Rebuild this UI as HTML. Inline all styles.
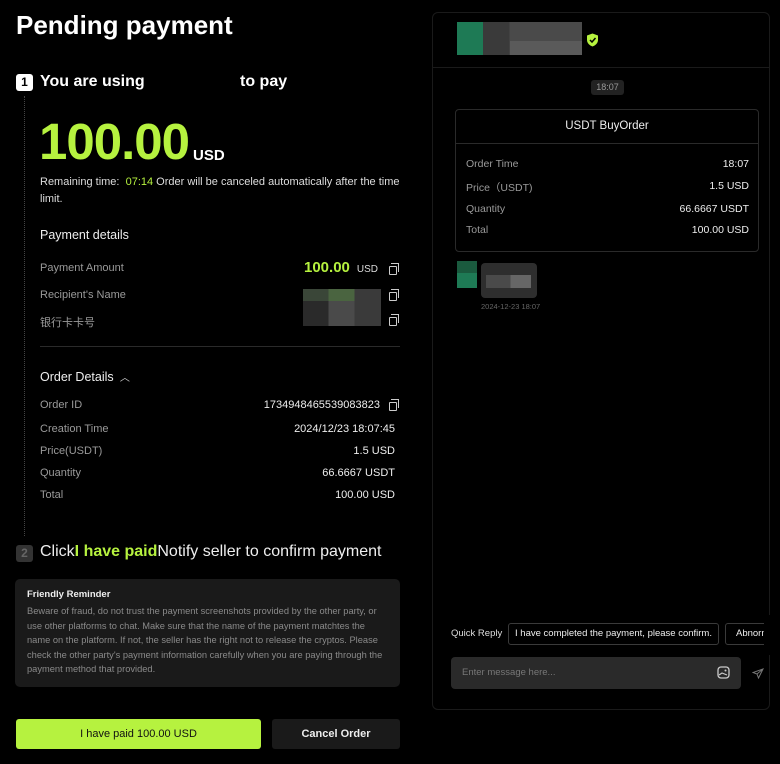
<!DOCTYPE html>
<html><head><meta charset="utf-8"><style>
*{margin:0;padding:0;box-sizing:border-box}
body{width:780px;height:764px;background:#000;color:#fff;font-family:"Liberation Sans","Noto Sans CJK SC",sans-serif;position:relative;overflow:hidden}
.a{position:absolute;white-space:nowrap}
.lbl{color:#9a9a9a;font-size:11px}
.val{color:#eee;font-size:11px;text-align:right}
.g{color:#b6f23f}
.cp{position:absolute;width:8px;height:9px;border:1.2px solid #ccc;border-radius:1px}
.cp:after{content:"";position:absolute;left:1px;top:-4px;width:7px;height:8px;border-top:1.2px solid #ccc;border-right:1.2px solid #ccc}
</style></head><body>
<div class="a" style="left:16px;top:10px;font-size:26px;font-weight:bold">Pending payment</div>

<div class="a" style="left:16px;top:74px;width:17px;height:17px;background:#fff;border-radius:3px;color:#000;font-size:12px;font-weight:bold;text-align:center;line-height:17px">1</div>
<div class="a" style="left:40px;top:73px;font-size:16px;font-weight:bold">You are using</div>
<div class="a" style="left:240px;top:73px;font-size:16px;font-weight:bold">to pay</div>
<div class="a" style="left:24px;top:96px;height:440px;border-left:1px dotted #444"></div>

<div class="a g" style="left:39px;top:112px;font-size:51px;font-weight:bold;letter-spacing:-1px">100.00</div>
<div class="a" style="left:193px;top:147px;font-size:15px;font-weight:bold">USD</div>
<div class="a" style="left:40px;top:174px;font-size:11px;line-height:17px;width:360px;white-space:normal;color:#ddd">Remaining time: &nbsp;<span class="g">07:14</span> Order will be canceled automatically after the time limit.</div>

<div class="a" style="left:40px;top:228px;font-size:12.5px;color:#eee">Payment details</div>
<div class="a lbl" style="left:40px;top:262px">Payment Amount</div>
<div class="a" style="left:304px;top:259px;font-size:15px;font-weight:bold" ><span class="g">100.00</span> <span style="font-size:10px;font-weight:normal;color:#ddd">&nbsp;USD</span></div>
<div class="cp" style="left:389px;top:266px"></div>
<div class="a lbl" style="left:40px;top:289px">Recipient's Name</div>
<div class="cp" style="left:389px;top:292px"></div>
<div class="a lbl" style="left:40px;top:314px">银行卡卡号</div>
<div class="cp" style="left:389px;top:317px"></div>
<div class="a" style="left:303px;top:289px;width:78px;height:37px;background:linear-gradient(90deg,#2a2a2a 33%,#4a4a4a 33%,#4a4a4a 66%,#3a3a3a 66%)"></div>
<div class="a" style="left:303px;top:289px;width:78px;height:12px;background:linear-gradient(90deg,#3a4638 33%,#4a6440 33%,#4a6440 66%,#3a3a3a 66%)"></div>
<div class="a" style="left:40px;top:346px;width:360px;border-top:1px solid #2a2a2a"></div>

<div class="a" style="left:40px;top:369px;font-size:12.5px;color:#eee">Order Details <span style="color:#ccc;font-size:10px">&nbsp;︿</span></div>
<div class="a lbl" style="left:40px;top:399px">Order ID</div>
<div class="a val" style="left:240px;width:140px;top:399px">1734948465539083823</div>
<div class="cp" style="left:389px;top:402px"></div>
<div class="a lbl" style="left:40px;top:423px">Creation Time</div>
<div class="a val" style="left:240px;width:155px;top:423px">2024/12/23 18:07:45</div>
<div class="a lbl" style="left:40px;top:445px">Price(USDT)</div>
<div class="a val" style="left:240px;width:155px;top:445px">1.5 USD</div>
<div class="a lbl" style="left:40px;top:467px">Quantity</div>
<div class="a val" style="left:240px;width:155px;top:467px">66.6667 USDT</div>
<div class="a lbl" style="left:40px;top:489px">Total</div>
<div class="a val" style="left:240px;width:155px;top:489px">100.00 USD</div>

<div class="a" style="left:16px;top:545px;width:17px;height:17px;background:#333;border-radius:3px;color:#666;font-size:12px;font-weight:bold;text-align:center;line-height:17px">2</div>
<div class="a" style="left:40px;top:543px;font-size:16px;color:#eee">Click<b class="g">I have paid</b>Notify seller to confirm payment</div>

<div class="a" style="left:15px;top:579px;width:385px;height:108px;background:#1a1a1a;border-radius:5px"></div>
<div class="a" style="left:27px;top:589px;font-size:9.5px;font-weight:bold;color:#eee">Friendly Reminder</div>
<div class="a" style="left:27px;top:604px;width:360px;white-space:normal;font-size:9.3px;line-height:14.5px;color:#8a8a8a">Beware of fraud, do not trust the payment screenshots provided by the other party, or use other platforms to chat. Make sure that the name of the payment matchtes the name on the platform. If not, the seller has the right not to release the cryptos. Please check the other party's payment information carefully when you are paying through the payment method that provided.</div>

<div class="a" style="left:16px;top:719px;width:245px;height:30px;background:#b6f23f;border-radius:3px;color:#111;font-size:11px;text-align:center;line-height:30px">I have paid 100.00 USD</div>
<div class="a" style="left:272px;top:719px;width:128px;height:30px;background:#1a1a1a;border-radius:3px;color:#eee;font-size:11px;font-weight:bold;text-align:center;line-height:30px">Cancel Order</div>

<!-- right panel -->
<div class="a" style="left:432px;top:12px;width:338px;height:698px;border:1px solid #1a1a1a;border-radius:6px"></div>
<div class="a" style="left:432px;top:67px;width:338px;border-top:1px solid #1a1a1a"></div>
<div class="a" style="left:457px;top:22px;width:125px;height:33px;background:linear-gradient(90deg,#1e7a55 21%,#3a3a3a 21%,#3a3a3a 42%,#4a4a4a 42%)"></div>
<div class="a" style="left:510px;top:41px;width:72px;height:14px;background:#5a5a5a"></div>
<svg class="a" style="left:586px;top:33px" width="13" height="14" viewBox="0 0 13 14"><path d="M6.5 0.5L12 2.5V7C12 10 9.5 12.5 6.5 13.5C3.5 12.5 1 10 1 7V2.5Z" fill="#b6f23f"/><path d="M4 7L6 9L9.5 5" stroke="#000" stroke-width="1.5" fill="none"/></svg>

<div class="a" style="left:591px;top:80px;width:33px;height:15px;background:#222;border-radius:3px;color:#999;font-size:9px;text-align:center;line-height:15px">18:07</div>

<div class="a" style="left:455px;top:109px;width:304px;height:143px;border:1px solid #2a2a2a;border-radius:4px"></div>
<div class="a" style="left:455px;top:143px;width:304px;border-top:1px solid #2a2a2a"></div>
<div class="a" style="left:455px;top:120px;width:304px;text-align:center;font-size:11.5px;color:#eee">USDT BuyOrder</div>
<div class="a lbl" style="left:466px;top:158px;font-size:10.5px">Order Time</div>
<div class="a val" style="left:600px;width:149px;top:158px;font-size:10.5px">18:07</div>
<div class="a lbl" style="left:466px;top:180px;font-size:10.5px">Price（USDT)</div>
<div class="a val" style="left:600px;width:149px;top:180px;font-size:10.5px">1.5 USD</div>
<div class="a lbl" style="left:466px;top:203px;font-size:10.5px">Quantity</div>
<div class="a val" style="left:600px;width:149px;top:203px;font-size:10.5px">66.6667 USDT</div>
<div class="a lbl" style="left:466px;top:224px;font-size:10.5px">Total</div>
<div class="a val" style="left:600px;width:149px;top:224px;font-size:10.5px">100.00 USD</div>

<div class="a" style="left:457px;top:261px;width:20px;height:27px;background:linear-gradient(#1a5a3e 45%,#1e7a55 45%)"></div>
<div class="a" style="left:481px;top:263px;width:56px;height:35px;background:#2e2e2e;border-radius:4px"></div>
<div class="a" style="left:486px;top:275px;width:45px;height:13px;background:linear-gradient(90deg,#4a4a4a 55%,#666 55%)"></div>
<div class="a" style="left:481px;top:302px;font-size:7.5px;color:#666">2024-12-23 18:07</div>

<div class="a" style="left:451px;top:628px;font-size:9.5px;color:#ddd">Quick Reply</div>
<div class="a" style="left:508px;top:623px;width:211px;height:22px;border:1px solid #3a3a3a;border-radius:3px;font-size:9.5px;color:#eee;text-align:center;line-height:20px">I have completed the payment, please confirm.</div>
<div class="a" style="left:725px;top:623px;width:60px;height:22px;border:1px solid #3a3a3a;border-radius:3px;font-size:9.5px;color:#eee;line-height:20px;padding-left:10px">Abnormal</div>
<div class="a" style="left:764px;top:615px;width:16px;height:40px;background:#000"></div>

<div class="a" style="left:451px;top:657px;width:290px;height:32px;background:#2a2a2a;border-radius:4px"></div>
<div class="a" style="left:462px;top:667px;font-size:9.5px;color:#777">Enter message here...</div>
<svg class="a" style="left:717px;top:666px" width="13" height="13" viewBox="0 0 13 13"><rect x="1" y="1" width="11" height="11" rx="3" fill="none" stroke="#ccc" stroke-width="1.3"/><circle cx="8.5" cy="4.5" r="1" fill="#ccc"/><path d="M2 9L5 7L10 9" stroke="#ccc" stroke-width="1.2" fill="none"/></svg>
<svg class="a" style="left:752px;top:668px" width="12" height="11" viewBox="0 0 12 11"><path d="M11 1L1 4.5L5 6L6.5 10Z M5 6L11 1" fill="none" stroke="#777" stroke-width="1"/></svg>
</body></html>
